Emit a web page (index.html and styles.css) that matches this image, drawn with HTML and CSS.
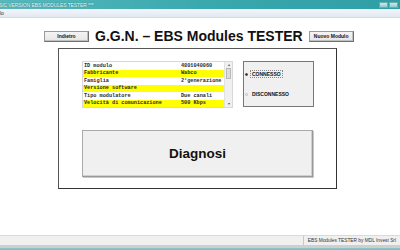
FILE: index.html
```html
<!DOCTYPE html>
<html>
<head>
<meta charset="utf-8">
<link rel="stylesheet" href="styles.css">
</head>
<body>
<div class="window">
  <div class="titlebar">
    <span class="title-text">SIC VERSION EBS MODULES TESTER ***</span>
    <div class="winbtns"><span class="wb wb-min"></span><span class="wb wb-max"></span></div>
  </div>
  <div class="menubar"><span class="menu-item">lo</span></div>
  <div class="client">
    <div class="header">
      <button class="btn small">Indietro</button>
      <h1 class="apptitle">G.G.N. – EBS Modules TESTER</h1>
      <button class="btn small">Nuovo Modulo</button>
    </div>
    <div class="frame">
      <div class="toprow">
        <div class="list">
          <div class="rows">
            <div class="row"><span class="k">ID modulo</span><span class="v">4801040060</span></div>
            <div class="row hl"><span class="k">Fabbricante</span><span class="v">Wabco</span></div>
            <div class="row"><span class="k">Famiglia</span><span class="v">2°generazione</span></div>
            <div class="row hl"><span class="k">Versione software</span><span class="v"></span></div>
            <div class="row"><span class="k">Tipo modulatore</span><span class="v">Due canali</span></div>
            <div class="row hl"><span class="k">Velocità di comunicazione</span><span class="v">500 Kbps</span></div>
          </div>
          <div class="scroll">
            <span class="arrow">&#9652;</span>
            <span class="thumb"></span>
            <span class="track"></span>
            <span class="arrow">&#9662;</span>
          </div>
        </div>
        <div class="radios">
          <label class="radio"><span class="dot on"></span><span class="rlabel focus">CONNESSO</span></label>
          <label class="radio"><span class="dot"></span><span class="rlabel">DISCONNESSO</span></label>
        </div>
      </div>
      <button class="btn big">Diagnosi</button>
    </div>
  </div>
  <div class="statusbar">
    <span class="status-text">EBS Modules TESTER by MDL Invest Srl</span>
  </div>
  <div class="bottomedge"></div>
</div>
</body>
</html>
```

FILE: styles.css
```css
html, body {
  margin: 0;
  padding: 0;
  width: 400px;
  height: 250px;
  overflow: hidden;
  background: #ffffff;
  font-family: "Liberation Sans", Arial, sans-serif;
}
.window {
  width: 400px;
  height: 250px;
  display: flex;
  flex-direction: column;
}
.titlebar {
  height: 9px;
  flex: none;
  background: linear-gradient(90deg, #57b8bc 0%, #3aa9ae 50%, #2f9fa6 100%);
  display: flex;
  align-items: center;
  justify-content: space-between;
}
.title-text {
  font-size: 5px;
  color: #f4fbfb;
  letter-spacing: -0.1px;
  margin-left: -1px;
  white-space: nowrap;
  text-shadow: 0 0 1px #1c5f63;
}
.winbtns {
  display: flex;
  margin-right: 2px;
  gap: 1px;
}
.wb {
  display: block;
  width: 9px;
  height: 6px;
  background: linear-gradient(#cfe9ea, #8fcacc);
  border: 1px solid #6fa9ac;
  box-sizing: border-box;
}
.menubar {
  height: 8px;
  flex: none;
  background: linear-gradient(#f3f6fb, #e2e8f2);
  border-bottom: 1px solid #d5dbe6;
  display: flex;
  align-items: center;
}
.menu-item {
  font-size: 5px;
  color: #333;
}
.client {
  flex: 1;
  background: #ffffff;
  display: flex;
  flex-direction: column;
}
.header {
  display: flex;
  align-items: center;
  margin: 10px 0 0 44px;
  height: 16px;
}
.btn {
  font-family: "Liberation Sans", Arial, sans-serif;
  background: linear-gradient(#f4f4f4, #e6e6e6);
  border: 1px solid #8c8c8c;
  box-shadow: inset -1px -1px 0 #c0c0c0;
  color: #111;
  padding: 0;
  margin: 0;
}
.btn.small {
  width: 45px;
  height: 11px;
  font-size: 5px;
  font-weight: bold;
  white-space: nowrap;
  border-color: #9a9a9a #707070 #707070 #9a9a9a;
}
.apptitle {
  margin: 0 6px;
  font-size: 14px;
  font-weight: bold;
  color: #111;
  white-space: nowrap;
  line-height: 16px;
}
.frame {
  margin: 4px 0 0 58px;
  width: 279px;
  height: 141px;
  box-sizing: border-box;
  border: 1px solid #555;
  border-right-color: #333;
  border-bottom-color: #333;
  padding: 12px 0 0 23px;
  display: flex;
  flex-direction: column;
}
.toprow {
  display: flex;
  gap: 10px;
}
.list {
  width: 151px;
  height: 47px;
  box-sizing: border-box;
  border: 1px solid #d8d8d8;
  display: flex;
  background: #fff;
}
.rows {
  flex: 1;
  display: flex;
  flex-direction: column;
}
.row {
  height: 7.5px;
  display: flex;
  align-items: center;
  font-family: "Liberation Mono", "Courier New", monospace;
  font-size: 5.2px;
  font-weight: bold;
  color: #2a2a2a;
}
.row.hl {
  background: #ffff00;
}
.k {
  width: 97px;
  padding-left: 1px;
  white-space: nowrap;
}
.v {
  white-space: nowrap;
}
.scroll {
  width: 7px;
  flex: none;
  background: #f0f0f0;
  border-left: 1px solid #e2e2e2;
  display: flex;
  flex-direction: column;
  align-items: center;
}
.arrow {
  font-size: 4px;
  line-height: 6px;
  height: 6px;
  color: #555;
}
.thumb {
  width: 5px;
  height: 11px;
  background: #dcdcdc;
  border: 1px solid #b8b8b8;
  box-sizing: border-box;
}
.track {
  flex: 1;
}
.radios {
  width: 71px;
  height: 46px;
  box-sizing: border-box;
  background: #f0f0f0;
  border: 1px solid #777;
  display: flex;
  flex-direction: column;
  justify-content: space-around;
  padding: 2px 0 2px 1px;
}
.radio {
  display: flex;
  align-items: center;
  gap: 2px;
  font-size: 5px;
  font-weight: bold;
  color: #111;
  white-space: nowrap;
}
.dot {
  width: 3px;
  height: 3px;
  border-radius: 50%;
  border: 1px solid #b8b8b8;
  box-sizing: border-box;
  background: #fafafa;
}
.dot.on {
  background: #222;
  border-color: #444;
}
.rlabel {
  padding: 0 1px;
  border: 1px solid transparent;
}
.rlabel.focus {
  border: 1px dotted #888;
}
.btn.big {
  margin-top: 22px;
  width: 231px;
  height: 47px;
  font-size: 13.5px;
  font-weight: bold;
  background: #f0f0f0;
  border: 1px solid #aaa;
  border-right-color: #999;
  border-bottom-color: #999;
  box-shadow: inset -1px -1px 0 #d0d0d0, 1px 1px 0 #c8c8c8;
}
.statusbar {
  height: 9px;
  flex: none;
  background: #f0f0f0;
  border-top: 1px solid #dadada;
  display: flex;
  justify-content: flex-end;
  align-items: stretch;
}
.status-text {
  font-size: 4.8px;
  color: #333;
  border-left: 1px solid #c8c8c8;
  padding: 0 4px 0 4px;
  display: flex;
  align-items: center;
  white-space: nowrap;
}
.bottomedge {
  height: 5px;
  flex: none;
  background: linear-gradient(#cfcfcf 0, #cfcfcf 3px, #8fc6c8 3px, #7fbcc0 100%);
}
```
